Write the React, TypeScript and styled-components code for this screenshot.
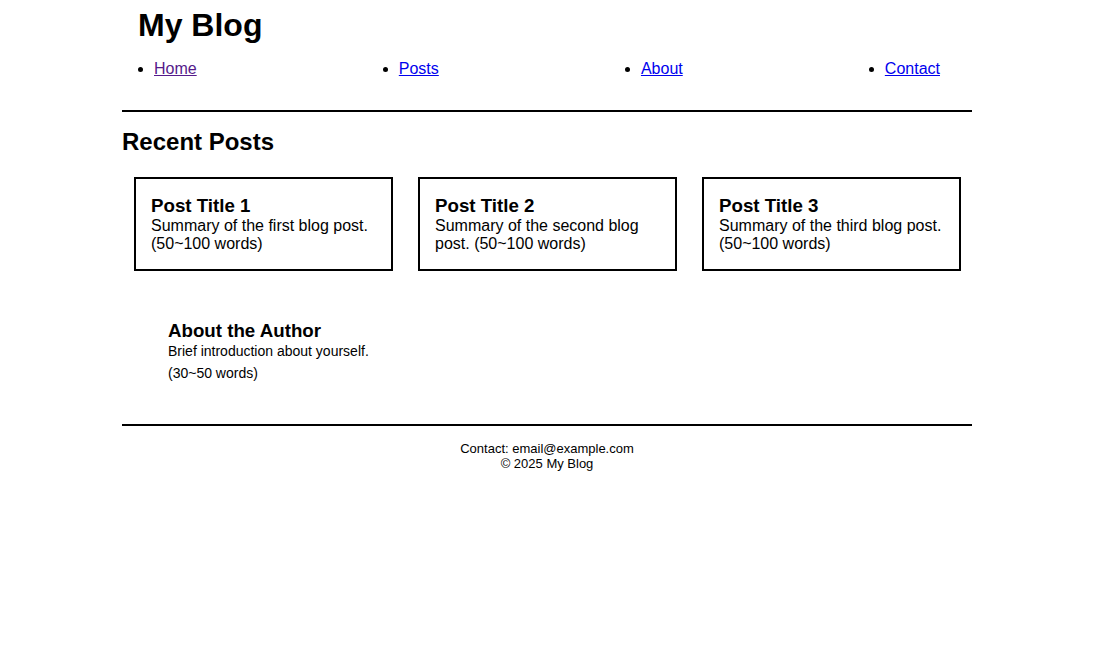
import React from "react";
import styled, { createGlobalStyle } from "styled-components";

const Global = createGlobalStyle`
  html, body { margin: 0; padding: 0; background: #fff; }
  body { font-family: "Liberation Sans", Arial, sans-serif; color: #000; }
`;

const Page = styled.div`
  width: 850px;
  margin-left: 122px;
`;

const Header = styled.header`
  padding: 7px 16px 0;
`;

const SiteTitle = styled.h1`
  margin: 0;
  font-size: 32px;
  line-height: 37px;
  font-weight: 700;
`;

const NavList = styled.ul`
  display: flex;
  justify-content: space-between;
  margin: 16px 0 31px;
  padding: 0 16px;
  list-style: disc outside;
`;

const NavItem = styled.li`
  font-size: 16px;
  line-height: 18.5px;
`;

const NavLink = styled.a<{ $visited?: boolean }>`
  color: ${(p) => (p.$visited ? "#551a8b" : "#0000ee")};
  text-decoration: underline;
`;

const Rule = styled.hr`
  margin: 0;
  border: none;
  border-top: 2px solid #000;
  height: 0;
`;

const SectionTitle = styled.h2`
  margin: 16px 0 22px;
  font-size: 24px;
  line-height: 27.6px;
  font-weight: 700;
`;

const CardGrid = styled.div`
  display: grid;
  grid-template-columns: repeat(3, 1fr);
  column-gap: 25px;
  padding: 0 11px 0 12px;
`;

const Card = styled.article`
  border: 2px solid #000;
  padding: 16px 15px;
`;

const CardTitle = styled.h3`
  margin: 0;
  font-size: 18.72px;
  line-height: 21.5px;
  font-weight: 700;
`;

const CardText = styled.p`
  margin: 0;
  font-size: 16px;
  line-height: 18.4px;
`;

const About = styled.section`
  padding: 49px 46px 43px;
  display: flex;
  flex-direction: column;
`;

const AboutTitle = styled.h3`
  margin: 0 0 1px;
  font-size: 18.72px;
  line-height: 21.5px;
  font-weight: 700;
`;

const AboutText = styled.p`
  margin: 0;
  font-size: 14px;
  line-height: 16.1px;
  & + & {
    margin-top: 6px;
  }
`;

const Footer = styled.footer`
  padding-top: 15px;
  text-align: center;
  font-size: 13px;
  line-height: 15px;
`;

const posts = [
  { title: "Post Title 1", text: "Summary of the first blog post. (50~100 words)" },
  { title: "Post Title 2", text: "Summary of the second blog post. (50~100 words)" },
  { title: "Post Title 3", text: "Summary of the third blog post. (50~100 words)" },
];

const nav = [
  { label: "Home", visited: true },
  { label: "Posts" },
  { label: "About" },
  { label: "Contact" },
];

export default function App() {
  return (
    <>
      <Global />
      <Page>
        <Header>
          <SiteTitle>My Blog</SiteTitle>
          <nav>
            <NavList>
              {nav.map((n) => (
                <NavItem key={n.label}>
                  <NavLink href="#" $visited={n.visited}>
                    {n.label}
                  </NavLink>
                </NavItem>
              ))}
            </NavList>
          </nav>
        </Header>
        <Rule />
        <main>
          <SectionTitle>Recent Posts</SectionTitle>
          <CardGrid>
            {posts.map((p) => (
              <Card key={p.title}>
                <CardTitle>{p.title}</CardTitle>
                <CardText>{p.text}</CardText>
              </Card>
            ))}
          </CardGrid>
          <About>
            <AboutTitle>About the Author</AboutTitle>
            <AboutText>Brief introduction about yourself.</AboutText>
            <AboutText>(30~50 words)</AboutText>
          </About>
        </main>
        <Rule />
        <Footer>
          Contact: email@example.com
          <br />© 2025 My Blog
        </Footer>
      </Page>
    </>
  );
}
